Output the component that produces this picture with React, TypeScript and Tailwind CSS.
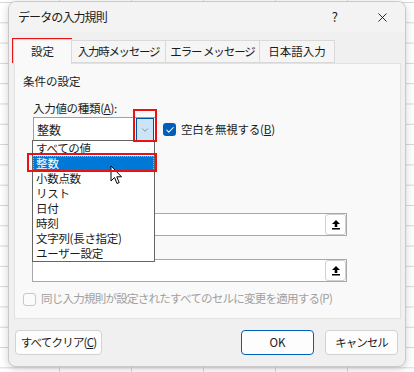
import { Check, ChevronDown, X } from "lucide-react";

const font = { fontFamily: '"Noto Sans CJK JP", "Noto Sans", sans-serif' };

const items = ["すべての値", "整数", "小数点数", "リスト", "日付", "時刻", "文字列(長さ指定)", "ユーザー設定"];

function RefButton() {
  return (
    <div className="w-[21px] h-[21px] bg-white border border-[#d0d0d0] rounded-[3px] flex items-center justify-center">
      <svg width="10" height="11" viewBox="0 0 10 11">
        <path d="M5 1 L9 5 H6.3 V8 H3.7 V5 H1 Z" fill="#000" />
        <rect x="1" y="9" width="8" height="1.5" fill="#000" />
      </svg>
    </div>
  );
}

function RangeBox() {
  return (
    <div className="w-[315px] h-[23px] bg-white border border-[#a8a8a8] flex items-center justify-end">
      <RefButton />
    </div>
  );
}

export default function App() {
  return (
    <div
      className="relative w-[414px] h-[372px] overflow-hidden bg-white bg-[linear-gradient(to_right,#d6d6d6_1px,transparent_1px),linear-gradient(to_bottom,#d6d6d6_1px,transparent_1px)] bg-[size:72px_20.3px] bg-[position:59px_2px] pl-[8px] pt-[1px] text-[11.5px] text-[#1b1b1b]"
      style={font}
    >
      <div className="w-[398px] h-[366px] rounded-[8px] border border-[#c9c9c9] bg-[#f0f0f0] shadow-[0_2px_8px_rgba(0,0,0,0.18)] flex flex-col overflow-hidden">
        {/* title bar */}
        <div className="h-[30px] bg-[#f3f3f3] flex items-center pl-[9px] pr-[15px]">
          <span className="tracking-[-0.9px] text-[12px]">データの入力規則</span>
          <span className="ml-auto mr-[37px] text-[13px]">?</span>
          <X className="w-[15px] h-[15px]" strokeWidth={1.5} />
        </div>

        {/* tabs */}
        <div className="mt-[7px] ml-[4px] flex items-end h-[24px]">
          <div className="w-[59px] h-[25px] -mb-px z-10 bg-[#f9f9f9] border border-b-0 border-[#d9d9d9] flex items-center justify-center">設定</div>
          <div className="w-[94px] h-[23px] bg-[#f5f5f5] border border-l-0 border-[#d9d9d9] flex items-center justify-center tracking-[-1.3px]">入力時メッセージ</div>
          <div className="w-[94px] h-[23px] bg-[#f5f5f5] border border-l-0 border-[#d9d9d9] flex items-center justify-center tracking-[-1.1px]">エラー メッセージ</div>
          <div className="w-[75px] h-[23px] bg-[#f5f5f5] border border-l-0 border-[#d9d9d9] flex items-center justify-center">日本語入力</div>
        </div>

        {/* panel */}
        <div className="ml-[5px] w-[387px] h-[256px] bg-[#f9f9f9] border border-[#e2e2e2] flex flex-col pl-[8px]">
          <div className="mt-[9px] h-[16px] leading-[16px]">条件の設定</div>
          <div className="mt-[11px] ml-[10px] h-[16px] leading-[16px] tracking-[-0.3px]">
            入力値の種類(<span className="underline">A</span>):
          </div>
          <div className="mt-[1px] ml-[10px] flex items-center">
            <div className="w-[123px] h-[25px] bg-white border border-[#a0a0a0] flex items-center pl-[3px] pr-[1px]">
              <span className="text-[12px]">整数</span>
              <div className="ml-auto w-[18px] h-[23px] bg-[#cce4f7] border border-[#005499] flex items-center justify-center">
                <ChevronDown className="w-[10px] h-[10px] text-[#606060]" strokeWidth={1.5} />
              </div>
            </div>
            <div className="ml-[7px] w-[13px] h-[13px] rounded-[3px] bg-[#005fb8] flex items-center justify-center">
              <Check className="w-[10px] h-[10px] text-white" strokeWidth={2.5} />
            </div>
            <span className="ml-[5px] tracking-[-0.2px]">
              空白を無視する(<span className="underline">B</span>)
            </span>
          </div>
          <div className="mt-[71px] ml-[9px]">
            <RangeBox />
          </div>
          <div className="mt-[23px] ml-[9px]">
            <RangeBox />
          </div>
          <div className="mt-[9px] flex items-center h-[16px]">
            <div className="w-[13px] h-[13px] rounded-[3px] border border-[#c8c8c8] bg-[#fbfbfb]" />
            <span className="ml-[5px] text-[#a0a0a0] tracking-[-0.75px]">同じ入力規則が設定されたすべてのセルに変更を適用する(P)</span>
          </div>
        </div>

        {/* buttons */}
        <div className="mt-[11px] flex items-center pl-[6px] pr-[7px]">
          <button className="w-[87px] h-[25px] bg-[#fdfdfd] border border-[#d2d2d2] rounded-[4px] tracking-[-0.8px]">
            すべてクリア(<span className="underline">C</span>)
          </button>
          <button className="ml-auto w-[73px] h-[25px] bg-[#fdfdfd] border border-[#005fb8] rounded-[4px]">OK</button>
          <button className="ml-[11px] w-[73px] h-[25px] bg-[#fdfdfd] border border-[#d2d2d2] rounded-[4px] tracking-[-1px]">キャンセル</button>
        </div>
      </div>

      {/* open dropdown list */}
      <div className="absolute left-[32px] top-[140px] w-[123px] h-[122px] bg-white border border-[#646464] flex flex-col">
        {items.map((it) => (
          <div
            key={it}
            className={
              it === "整数"
                ? "h-[15px] leading-[15px] pl-[3px] bg-[#0078d7] text-white outline outline-1 outline-dotted outline-[#f0a040] -outline-offset-1"
                : "h-[15px] leading-[15px] pl-[3px] tracking-[-0.3px]"
            }
          >
            {it}
          </div>
        ))}
      </div>

      {/* mouse cursor */}
      <svg className="absolute left-[110px] top-[165px]" width="13" height="20" viewBox="0 0 13 20">
        <path d="M1 1 V16 L4.5 12.5 L7 18.5 L9.2 17.6 L6.8 11.8 H11.5 Z" fill="#fff" stroke="#000" strokeWidth="1" strokeLinejoin="round" />
      </svg>

      {/* red annotation boxes */}
      <div className="absolute left-[12px] top-[38px] w-[60px] h-[25px] border-2 border-[#ee1111]" />
      <div className="absolute left-[133px] top-[109px] w-[24px] h-[33px] border-2 border-[#ee1111]" />
      <div className="absolute left-[27px] top-[153px] w-[130px] h-[19px] border-2 border-[#ee1111]" />
    </div>
  );
}
